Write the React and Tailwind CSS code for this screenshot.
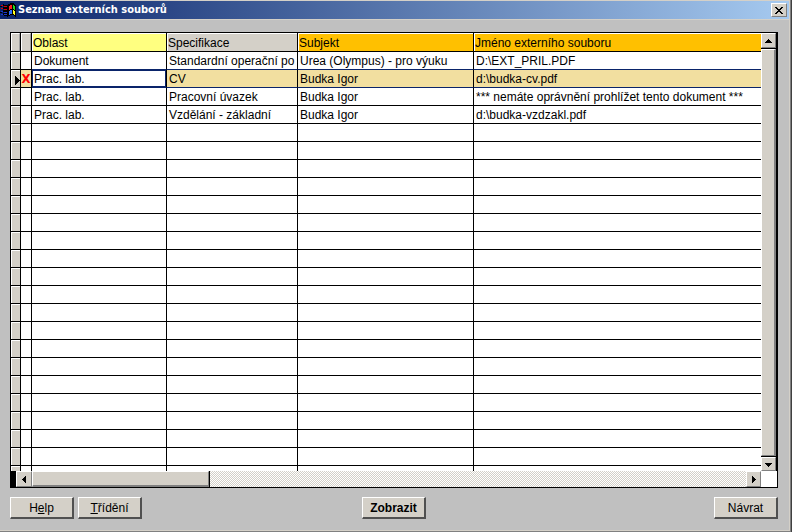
import React from 'react';

const RAISED =
  'border border-t-white border-l-white border-r-[#808080] border-b-[#808080] bg-[#d4d0c8]';

const COLUMNS = [
  { title: 'Oblast', color: 'bg-[#ffff80]' },
  { title: 'Specifikace', color: 'bg-[#d4d0c8]' },
  { title: 'Subjekt', color: 'bg-[#ffc000]' },
  { title: 'Jméno externího souboru', color: 'bg-[#ffc000]' },
];

const FILES = [
  ['Dokument', 'Standardní operační po', 'Urea (Olympus) - pro výuku', 'D:\\EXT_PRIL.PDF'],
  ['Prac. lab.', 'CV', 'Budka Igor', 'd:\\budka-cv.pdf'],
  ['Prac. lab.', 'Pracovní úvazek', 'Budka Igor', '*** nemáte oprávnění prohlížet tento dokument ***'],
  ['Prac. lab.', 'Vzdělání - základní', 'Budka Igor', 'd:\\budka-vzdzakl.pdf'],
];

const SELECTED = 1;
const BLANK_ROWS = 20;

function AppIcon() {
  return (
    <svg className="h-4 w-4 shrink-0" viewBox="0 0 16 16" shapeRendering="crispEdges" aria-hidden="true">
      <path d="M7 3h1V2h2V1h4v1h1v1h1v12h-1v-1h-1v-1h-4v1H8v1H7z" fill="#000" />
      <path d="M9 4h1V3h2v4h-2v1H9z" fill="#ff2020" />
      <path d="M13 3h1v1h1v4h-1V7h-1z" fill="#20e020" />
      <path d="M9 9h1V8h2v4h-2v1H9z" fill="#3070ff" />
      <path d="M13 8h1v1h1v4h-1v-1h-1z" fill="#ffff20" />
      <path d="M1 3h2v1H1zM4 4h3v1H4zM1 6h2v1H1zM4 7h3v1H4z" fill="#d00010" />
      <path d="M1 9h2v1H1zM4 10h3v1H4zM1 12h2v1H1zM4 12h3v1H4z" fill="#1838d0" />
      <path d="M3 2h1v2H3zM4 3h3v1H4zM3 5h1v2H3zM4 5h3v2H4zM3 8h1v2H3zM4 8h3v2H4zM3 11h1v2H3zM4 11h3v1H4zM4 13h3v1H4zM0 4h2v1H0zM0 10h2v1H0z" fill="#000" />
    </svg>
  );
}

function Arrow({ d, label, className }) {
  return (
    <button
      type="button"
      aria-label={label}
      className={`flex shrink-0 items-center justify-center ${RAISED} ${className}`}
    >
      <svg className="h-[7px] w-[7px]" viewBox="0 0 7 7" shapeRendering="crispEdges" aria-hidden="true">
        <path d={d} fill="#000" />
      </svg>
    </button>
  );
}

function PushButton({ children, className = '' }) {
  return (
    <button
      type="button"
      className={`h-[22px] w-16 border-t border-l border-r-2 border-b-2 border-t-white border-l-white border-r-[#505050] border-b-[#505050] bg-[#d4d0c8] text-center leading-5 ${className}`}
    >
      {children}
    </button>
  );
}

function Marker({ header = false }) {
  const Cell = header ? 'th' : 'td';
  return (
    <Cell className="border-r border-b border-black p-0">
      <div className={`border-t border-l border-white bg-[#d4d0c8] ${header ? 'h-[18px] border-r border-r-[#a0a0a0]' : 'h-[17px]'}`} />
    </Cell>
  );
}

function FileTable() {
  return (
    <table className="w-full table-fixed border-separate border-spacing-0 bg-white text-left">
      <colgroup>
        <col className="w-[10px]" />
        <col className="w-[11px]" />
        <col className="w-[135px]" />
        <col className="w-[131px]" />
        <col className="w-[176px]" />
        <col />
      </colgroup>
      <thead>
        <tr>
          <Marker header />
          <Marker header />
          {COLUMNS.map((c) => (
            <th key={c.title} className="border-r border-b border-black p-0 font-normal last:border-r-0">
              <div className={`h-[18px] truncate border-t border-l border-white leading-[18px] ${c.color}`}>
                {c.title}
              </div>
            </th>
          ))}
        </tr>
      </thead>
      <tbody>
        {FILES.map((file, r) => {
          const selected = r === SELECTED;
          const line = r === SELECTED || r === SELECTED - 1 ? 'border-b-[#0a246a]' : 'border-b-black';
          return (
            <tr key={r} className={selected ? 'bg-[#f2dfa0]' : 'bg-white'}>
              <td className="border-r border-b border-black p-0">
                <div className="flex h-[17px] items-end justify-end border-t border-l border-white bg-[#d4d0c8] pb-0.5">
                  {selected && (
                    <svg className="h-[9px] w-[5px]" viewBox="0 0 5 9" shapeRendering="crispEdges" role="img" aria-label="Aktuální řádek">
                      <path d="M0 0h1v1h1v1h1v1h1v1h1v1H4v1H3v1H2v1H1v1H0z" fill="#000" />
                    </svg>
                  )}
                </div>
              </td>
              <td className="border-r border-b border-black p-0">
                <div className="flex h-[17px] items-center justify-center font-['DejaVu_Sans_Condensed','DejaVu_Sans',sans-serif] text-[13px] font-bold text-[#ff0000]">
                  {selected ? 'X' : ''}
                </div>
              </td>
              {file.map((text, c) => (
                <td key={c} className={`border-r border-b border-r-black p-0 last:border-r-0 ${line}`}>
                  {selected && c === 0 ? (
                    <input
                      aria-label="Oblast"
                      defaultValue={text}
                      className="block h-[17px] w-full rounded-none border border-[#0a246a] bg-white pl-px outline-none"
                    />
                  ) : (
                    <div className="h-[17px] overflow-hidden pl-0.5 leading-[19px] whitespace-nowrap">{text}</div>
                  )}
                </td>
              ))}
            </tr>
          );
        })}
        {Array.from({ length: BLANK_ROWS }, (_, r) => (
          <tr key={r}>
            <Marker />
            <td className="border-r border-b border-black p-0" />
            <td className="border-r border-b border-black p-0" />
            <td className="border-r border-b border-black p-0" />
            <td className="border-r border-b border-black p-0" />
            <td className="border-b border-black p-0" />
          </tr>
        ))}
      </tbody>
    </table>
  );
}

export default function App() {
  return (
    <div className="flex h-screen border-r border-[#404040] bg-[#c0c0c0] font-['Liberation_Sans',Arial,sans-serif] text-xs text-black">
      <main className="flex min-w-0 flex-1 flex-col border-r border-b border-[#808080]">
        <div className="flex min-h-0 flex-1 flex-col border-t border-r border-b border-[#d4d0c8]">
          <header className="flex h-[19px] shrink-0 items-center border-b border-[#d4d0c8] bg-linear-to-r/srgb from-[#0a246a] to-[#a6caf0] pr-0.5">
            <AppIcon />
            <h1 className="flex-1 pl-0.5 font-['DejaVu_Sans_Condensed','DejaVu_Sans',sans-serif] text-[11px] leading-[18px] font-bold text-white">
              Seznam externích souborů
            </h1>
            <button type="button" aria-label="Zavřít" className={`flex h-[14px] w-4 items-center justify-center ${RAISED}`}>
              <svg className="h-[7px] w-2" viewBox="0 0 8 7" shapeRendering="crispEdges" aria-hidden="true">
                <path d="M0 0h2v1h1v1h2V1h1V0h2v1H7v1H6v1H5v1h1v1h1v1h1v1H6V6H5V5H3v1H2v1H0V6h1V5h1V4h1V3H2V2H1V1H0z" fill="#000" />
              </svg>
            </button>
          </header>

          <div className="flex min-h-0 flex-1 flex-col gap-[9px] pt-3 pr-[11px] pb-[11px] pl-[10px]">
            <section className="flex min-h-0 flex-1 flex-col border border-black">
              <div className="flex min-h-0 flex-1">
                <div className="min-w-0 flex-1 overflow-hidden">
                  <FileTable />
                </div>
                <div className="flex w-4 shrink-0 flex-col gap-px border-r border-black bg-black">
                  <Arrow label="Nahoru" d="M3 2h1v1h1v1h1v1h1v1H0V5h1V4h1V3h1z" className="h-[15px]" />
                  <div className={`flex-1 ${RAISED} border-r-2`} />
                  <Arrow label="Dolů" d="M0 2h7v1H6v1H5v1H4v1H3V5H2V4H1V3H0z" className="h-[14px]" />
                </div>
              </div>
              <div className="flex h-4 shrink-0 bg-black pl-[5px]">
                <Arrow label="Vlevo" d="M4 0h1v7H4V6H3V5H2V4H1V3h1V2h1V1h1z" className="w-4" />
                <div className={`w-[177px] ${RAISED} border-b-2`} />
                <div className="ml-px flex-1 bg-[#d4d0c8] bg-[conic-gradient(#fff_25%,#d4d0c8_25%_50%,#fff_50%_75%,#d4d0c8_75%)] bg-size-[2px_2px]" />
                <Arrow label="Vpravo" d="M2 0h1v1h1v1h1v1h1v1H5v1H4v1H3v1H2z" className="w-[15px]" />
                <div className="w-4 bg-white" />
              </div>
            </section>

            <footer className="grid shrink-0 grid-cols-[1fr_auto_1fr]">
              <div className="flex gap-1">
                <PushButton>
                  H<u>e</u>lp
                </PushButton>
                <PushButton>
                  <u>T</u>řídění
                </PushButton>
              </div>
              <PushButton className="font-bold">Zobrazit</PushButton>
              <PushButton className="justify-self-end">Návrat</PushButton>
            </footer>
          </div>
        </div>
      </main>
    </div>
  );
}
